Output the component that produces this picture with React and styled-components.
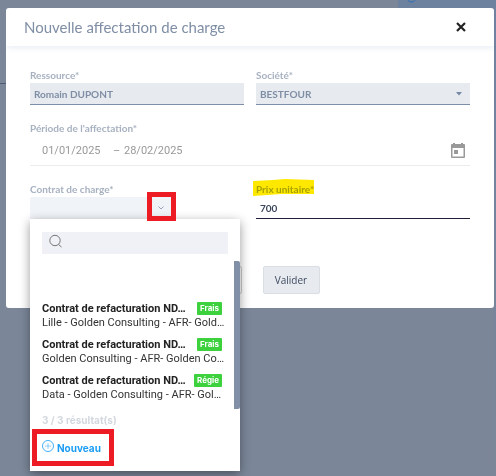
import React, { useState } from "react";
import styled, { createGlobalStyle } from "styled-components";

const GlobalStyle = createGlobalStyle`
  * {
    box-sizing: border-box;
  }
  body {
    margin: 0;
    background: #7b8799;
    font-family: Lato, "Open Sans", sans-serif;
  }
  input, select, button {
    font-family: inherit;
  }
`;

const Page = styled.div`
  min-height: 100vh;
  padding: 0 2px 0 6px;
  background: linear-gradient(#4d5b76, #4d5b76) 0 83px / 6px 1px no-repeat,
    linear-gradient(#6e82a0, #7b8799) right top / 2px 100% no-repeat, #7b8799;
`;

const TopStrip = styled.div`
  display: flex;
  justify-content: flex-end;
  height: 8px;
  margin-right: -2px;
`;

const TopTab = styled.div`
  width: 98px;
  padding-left: 8px;
  overflow: hidden;
  background: #6d829f;

  svg {
    display: block;
    margin-top: -8px;
  }
`;

const Modal = styled.section`
  background: #fff;
  border-radius: 3px;
`;

const Header = styled.header`
  display: flex;
  align-items: center;
  justify-content: space-between;
  height: 38px;
  padding: 0 24px 0 18px;
  box-shadow: 0 2px 6px #e9eff5;
  clip-path: inset(0 0 -10px 0);
`;

const Title = styled.h1`
  margin: 0;
  color: #7f8ea5;
  font-size: 15px;
  line-height: 20px;
  font-weight: 400;
`;

const CloseButton = styled.button`
  display: flex;
  padding: 4px;
  border: 0;
  background: none;
`;

const Form = styled.form`
  padding: 22px 24px 14px;
`;

const Row = styled.div`
  display: grid;
  grid-template-columns: 1fr 1fr;
  gap: 12px;
`;

const Field = styled.div`
  position: relative;
`;

const Label = styled.label`
  display: block;
  height: 15px;
  color: #a7b1c0;
  font-size: 10px;
  line-height: 14px;
  font-weight: 700;
  white-space: nowrap;
`;

const TextInput = styled.input`
  display: block;
  width: 100%;
  height: 22px;
  padding: 0 4px;
  border: 0;
  border-bottom: 1px solid ${(p) => (p.$active ? "#1f1f35" : "#7d8fa8")};
  border-radius: 0;
  outline: 0;
  background: ${(p) => (p.$active ? "#fff" : "#e7ebf0")};
  color: ${(p) => (p.$active ? "#3b465c" : "#7f8ea5")};
  font-size: 10px;
  font-weight: 700;
`;

const SelectWrap = styled.div`
  position: relative;

  svg {
    position: absolute;
    top: 9px;
    right: 8px;
    pointer-events: none;
  }
`;

const Select = styled(TextInput)`
  appearance: none;
`;

const Period = styled.div`
  margin: 16px 0;
`;

const PeriodLine = styled.div`
  display: flex;
  align-items: center;
  height: 30px;
  padding: 0 4px 0 12px;
  border-bottom: 1px solid #ececec;
  color: #999;
  font-family: Roboto, sans-serif;
  font-size: 11px;

  button {
    display: flex;
    margin-left: auto;
    padding: 0;
    border: 0;
    background: none;
  }
`;

const DateInput = styled.input`
  width: 71px;
  padding: 0;
  border: 0;
  outline: 0;
  background: none;
  color: #999;
  font-size: 11px;
`;

const Dash = styled.span`
  width: 11px;
`;

const ComboButton = styled.button`
  display: flex;
  align-items: center;
  justify-content: flex-end;
  width: 144px;
  height: 22px;
  padding: 0 10px 0 0;
  border: 0;
  border-radius: 2px 2px 0 0;
  background: #f0f3f7;
`;

const ArrowFrame = styled.span`
  position: absolute;
  z-index: 3;
  top: 10px;
  left: 117px;
  width: 29px;
  height: 29px;
  border: 5px solid #ed1c24;
  pointer-events: none;
`;

const Highlight = styled.span`
  position: relative;

  svg {
    position: absolute;
    top: -4px;
    left: -3px;
    mix-blend-mode: multiply;
  }
`;

const Actions = styled.div`
  display: flex;
  justify-content: center;
  gap: 21px;
  margin-top: 47px;
`;

const ActionButton = styled.button`
  min-width: ${(p) => (p.$plain ? "61px" : "57px")};
  height: 28px;
  padding: 0 8px;
  border: 1px solid ${(p) => (p.$plain ? "#ccc" : "#d9dee5")};
  border-radius: 2px;
  background: ${(p) => (p.$plain ? "#fff" : "#e7ebf0")};
  color: #3f4a60;
  font-family: "Open Sans", sans-serif;
  font-size: 10px;
`;

const Dropdown = styled.div`
  position: absolute;
  z-index: 2;
  top: 37px;
  left: 0;
  width: 210px;
  padding: 13px 0 5px;
  background: #fff;
  box-shadow: 0 3px 10px rgba(0, 0, 0, 0.4);
`;

const Search = styled.label`
  display: flex;
  align-items: center;
  gap: 6px;
  height: 22px;
  margin: 0 12px 7px;
  padding: 0 6px 4px;
  background: #f0f1f6;

  input {
    flex: 1;
    min-width: 0;
    border: 0;
    outline: 0;
    background: none;
    font-size: 10px;
  }
`;

const List = styled.ul`
  height: 148px;
  margin: 0;
  padding: 40px 12px 0;
  border-right: 6px solid #8290a7;
  border-radius: 0 2px 2px 0;
  list-style: none;
  font-family: Roboto, sans-serif;
`;

const Item = styled.li`
  height: 36px;
`;

const ItemHead = styled.div`
  display: flex;
  align-items: center;
  justify-content: space-between;
  height: 15px;
`;

const ItemTitle = styled.strong`
  color: #222;
  font-size: 11px;
  line-height: 15px;
  white-space: nowrap;
`;

const Badge = styled.span`
  padding: 0 3px;
  border-radius: 1px;
  background: #3dd13d;
  color: #fff;
  font-family: Inter, sans-serif;
  font-size: 8px;
  line-height: 13px;
  font-weight: 700;
`;

const ItemText = styled.div`
  color: #333;
  font-size: 11px;
  line-height: 13px;
  white-space: nowrap;
`;

const Count = styled.div`
  padding: 3px 12px 1px;
  color: #d3d8df;
  font-family: Inter, sans-serif;
  font-size: 10px;
  line-height: 16px;
  font-weight: 700;
`;

const NewFrame = styled.div`
  width: 82px;
  height: 37px;
  margin-left: 2px;
  border: 5px solid #ed1c24;
`;

const NewButton = styled.button`
  display: flex;
  align-items: center;
  gap: 3px;
  height: 27px;
  padding: 0 5px;
  border: 0;
  background: none;
  color: #1b9cf4;
  font-family: Inter, sans-serif !important;
  font-size: 10px;
  font-weight: 700;

  svg {
    flex: none;
    margin-bottom: 3px;
  }
`;

const contracts = [
  {
    id: 1,
    title: "Contrat de refacturation ND…",
    text: "Lille - Golden Consulting - AFR- Gold…",
    type: "Frais",
  },
  {
    id: 2,
    title: "Contrat de refacturation ND…",
    text: "Golden Consulting - AFR- Golden Co…",
    type: "Frais",
  },
  {
    id: 3,
    title: "Contrat de refacturation ND…",
    text: "Data - Golden Consulting - AFR- Gol…",
    type: "Régie",
  },
];

function ContractDropdown() {
  const [search, setSearch] = useState("");
  const results = contracts.filter((c) =>
    (c.title + c.text).toLowerCase().includes(search.toLowerCase())
  );

  return (
    <Dropdown>
      <Search>
        <svg width="15" height="15" viewBox="0 0 15 15" fill="none" stroke="#777">
          <circle cx="7" cy="6.5" r="5.2" />
          <path d="M10.500 10.500l3 2.500" />
        </svg>
        <input
          aria-label="Rechercher"
          value={search}
          onChange={(e) => setSearch(e.target.value)}
        />
      </Search>
      <List>
        {results.map((item) => (
          <Item key={item.id}>
            <ItemHead>
              <ItemTitle>{item.title}</ItemTitle>
              <Badge>{item.type}</Badge>
            </ItemHead>
            <ItemText>{item.text}</ItemText>
          </Item>
        ))}
      </List>
      <Count>
        {results.length} / {contracts.length} résultat(s)
      </Count>
      <NewFrame>
        <NewButton type="button">
          <svg width="12" height="12" viewBox="0 0 12 12" fill="none" stroke="#45aef5">
            <circle cx="6" cy="6" r="5.5" />
            <path d="M6 3v6M3 6h6" strokeOpacity="0.6" />
          </svg>
          Nouveau
        </NewButton>
      </NewFrame>
    </Dropdown>
  );
}

function App() {
  const [open, setOpen] = useState(true);
  const [price, setPrice] = useState("700");

  return (
    <>
      <GlobalStyle />
      <Page>
        <TopStrip>
          <TopTab>
            <svg width="11" height="11" viewBox="0 0 11 11" fill="none" stroke="#2f6fb5">
              <circle cx="5.5" cy="5.5" r="4.5" />
            </svg>
          </TopTab>
        </TopStrip>
        <Modal>
          <Header>
            <Title>Nouvelle affectation de charge</Title>
            <CloseButton type="button" aria-label="Fermer">
              <svg width="10" height="10" viewBox="0 0 10 10" stroke="#222" strokeWidth="2.2">
                <path d="M1 1l8 8M9 1l-8 8" />
              </svg>
            </CloseButton>
          </Header>
          <Form onSubmit={(e) => e.preventDefault()}>
            <Row>
              <Field>
                <Label htmlFor="ressource">Ressource*</Label>
                <TextInput id="ressource" defaultValue="Romain DUPONT" />
              </Field>
              <Field>
                <Label htmlFor="societe">Société*</Label>
                <SelectWrap>
                  <Select as="select" id="societe">
                    <option>BESTFOUR</option>
                  </Select>
                  <svg width="6" height="4" viewBox="0 0 6 4">
                    <path d="M0 0h6l-3 3.5z" fill="#7688a3" />
                  </svg>
                </SelectWrap>
              </Field>
            </Row>
            <Period>
              <Label htmlFor="debut">Période de l'affectation*</Label>
              <PeriodLine>
                <DateInput id="debut" defaultValue="01/01/2025" />
                <Dash>–</Dash>
                <DateInput aria-label="Fin de période" defaultValue="28/02/2025" />
                <button type="button" aria-label="Calendrier">
                  <svg width="16" height="16" viewBox="0 0 16 16">
                    <path
                      fill="#999"
                      fillRule="evenodd"
                      d="M3 0h2v1h6V0h2v1h1q1 0 1 1v12q0 1-1 1H2q-1 0-1-1V2q0-1 1-1h1zM2.500 5v8.500h11V5z"
                    />
                    <path fill="#999" d="M4 7h4v4H4z" />
                  </svg>
                </button>
              </PeriodLine>
            </Period>
            <Row>
              <Field>
                <Label htmlFor="contrat">Contrat de charge*</Label>
                <ComboButton id="contrat" type="button" onClick={() => setOpen(!open)}>
                  <svg width="6" height="4" viewBox="0 0 6 4" fill="none" stroke="#98a3b5">
                    <path d="M0.500 0.500l2.500 2.500 2.500-2.500" />
                  </svg>
                </ComboButton>
                <ArrowFrame />
                {open && <ContractDropdown />}
              </Field>
              <Field>
                <Label htmlFor="prix">
                  <Highlight>
                    Prix unitaire*
                    <svg width="61" height="17" viewBox="0 0 61 17">
                      <path d="M0 2L20 1 32 0 61 1V15L28 15 0 17z" fill="#ffe800" />
                    </svg>
                  </Highlight>
                </Label>
                <TextInput
                  id="prix"
                  $active
                  value={price}
                  onChange={(e) => setPrice(e.target.value)}
                />
              </Field>
            </Row>
            <Actions>
              <ActionButton type="button" $plain>
                Annuler
              </ActionButton>
              <ActionButton type="submit">Valider</ActionButton>
            </Actions>
          </Form>
        </Modal>
      </Page>
    </>
  );
}

export default App;
